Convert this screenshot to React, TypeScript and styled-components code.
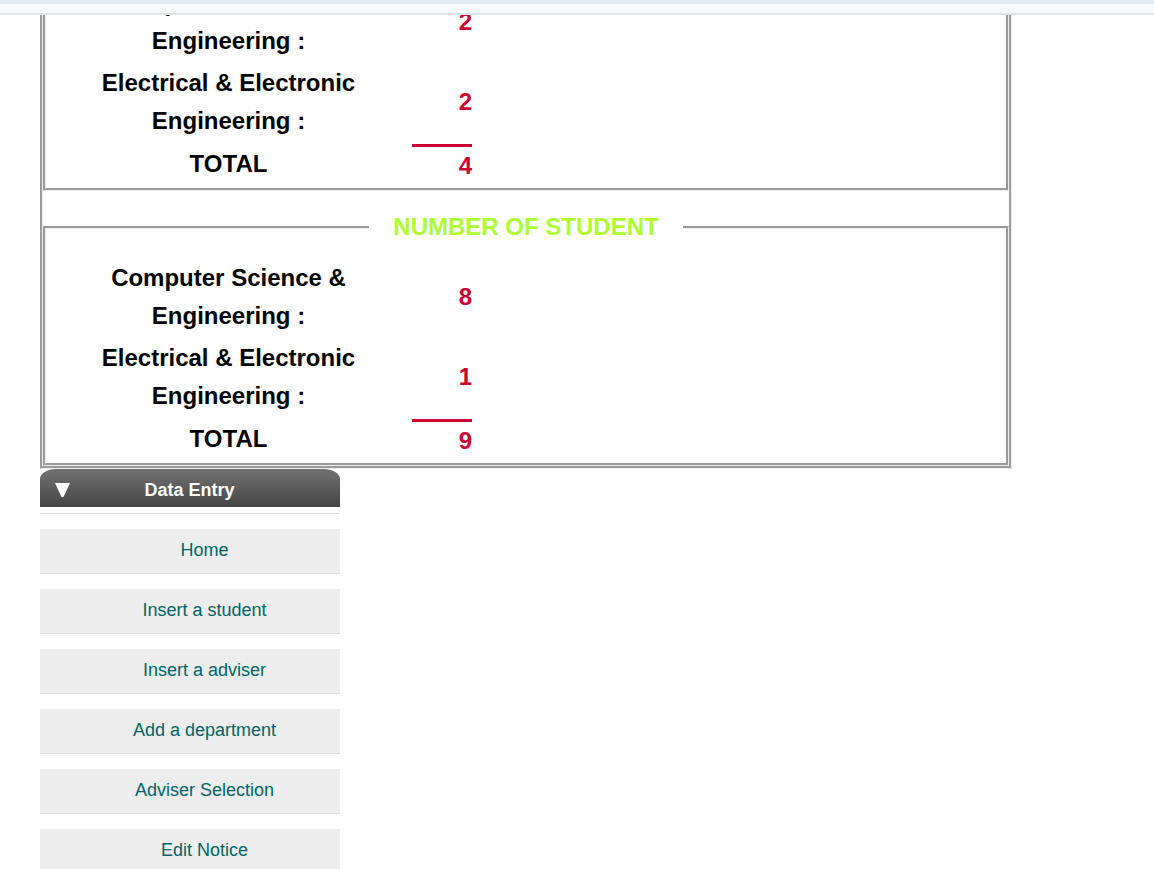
import React from "react";
import styled, { createGlobalStyle } from "styled-components";

const GlobalStyle = createGlobalStyle`
  *, *::before, *::after { box-sizing: border-box; }
  body {
    margin: 0;
    background: #fff;
    font-family: "Liberation Sans", Arial, sans-serif;
  }
`;

const Shell = styled.div`
  display: flex;
  flex-direction: column;
  height: 100vh;
  overflow: hidden;
`;

const TopBar = styled.header`
  flex: none;
  height: 15px;
  background: #f8f9fe;
  border-top: 4px solid #e2eaf3;
  border-bottom: 2px solid #e0e2ee;
`;

const Viewport = styled.main`
  flex: 1;
  min-height: 0;
  overflow: hidden;
  padding: 0 142px 0 40px;
`;

/* The statistics start part-way through, as in a scrolled page. */
const Statistics = styled.div`
  margin-top: -35px;
  border: 3px groove #eee;
  border-top: 0;
`;

const Group = styled.fieldset<{ $open?: boolean }>`
  min-width: 0;
  margin: 0;
  padding: ${(p) => (p.$open ? "0 32px" : "9px 32px 0")};
  border: 3px groove #eee;
  ${(p) => p.$open && "border-top: 0;"}

  & + & {
    margin-top: 17px;
  }
`;

const Legend = styled.legend`
  margin: 0 auto;
  padding: 0 24px;
  color: #adff2f;
  font-size: 24px;
  font-weight: bold;
  line-height: 38px;
`;

const Table = styled.table`
  border-collapse: separate;
  border-spacing: 0 4px;
  font-size: 24px;
  font-weight: bold;
  line-height: 38px;
`;

const Label = styled.th`
  width: 301px;
  padding: 0 16px;
  text-align: center;
`;

const Value = styled.td`
  width: 93px;
  padding: 0;
  color: #cc0033;
  text-align: right;
`;

const Sum = styled.div`
  width: 60px;
  margin-left: auto;
  border-top: 3px solid #cc0033;
  line-height: 37px;
`;

const Menu = styled.nav`
  width: 300px;
`;

const MenuHeader = styled.button`
  display: flex;
  align-items: center;
  width: 100%;
  height: 38px;
  padding: 4px 15px 0;
  border: 0;
  border-radius: 16px 16px 0 0 / 10px 10px 0 0;
  background: linear-gradient(#727272, #454545);
  color: #fff;
  font: bold 18px "Liberation Sans", Arial, sans-serif;
`;

const MenuTitle = styled.span`
  flex: 1;
  padding-right: 16px;
  text-align: center;
`;

const MenuList = styled.ul`
  display: grid;
  gap: 15px;
  margin: 6px 0 0;
  padding: 15px 0 0;
  border-top: 1px solid #ddd;
  list-style: none;
`;

const MenuLink = styled.a`
  display: block;
  height: 45px;
  padding-left: 29px;
  border-bottom: 1px solid #ddd;
  background: #ededed;
  color: #006464;
  font-size: 18px;
  line-height: 42px;
  text-align: center;
  text-decoration: none;
`;

interface CountsProps {
  computer: number;
  electrical: number;
}

function Counts({ computer, electrical }: CountsProps) {
  return (
    <Table>
      <tbody>
        <tr>
          <Label scope="row">Computer Science &amp; Engineering :</Label>
          <Value>{computer}</Value>
        </tr>
        <tr>
          <Label scope="row">Electrical &amp; Electronic Engineering :</Label>
          <Value>{electrical}</Value>
        </tr>
        <tr>
          <Label scope="row">TOTAL</Label>
          <Value>
            <Sum>{computer + electrical}</Sum>
          </Value>
        </tr>
      </tbody>
    </Table>
  );
}

const links = [
  "Home",
  "Insert a student",
  "Insert a adviser",
  "Add a department",
  "Adviser Selection",
  "Edit Notice",
];

export default function App() {
  return (
    <Shell>
      <GlobalStyle />
      <TopBar />
      <Viewport>
        <Statistics>
          <Group $open>
            <Counts computer={2} electrical={2} />
          </Group>
          <Group>
            <Legend>NUMBER OF STUDENT</Legend>
            <Counts computer={8} electrical={1} />
          </Group>
        </Statistics>
        <Menu>
          <MenuHeader type="button">
            <svg width="15" height="14" viewBox="0 0 15 14" aria-hidden="true">
              <path d="M0 0H15L8.5 14H6.5Z" fill="#fff" />
            </svg>
            <MenuTitle>Data Entry</MenuTitle>
          </MenuHeader>
          <MenuList>
            {links.map((text) => (
              <li key={text}>
                <MenuLink href="#">{text}</MenuLink>
              </li>
            ))}
          </MenuList>
        </Menu>
      </Viewport>
    </Shell>
  );
}
